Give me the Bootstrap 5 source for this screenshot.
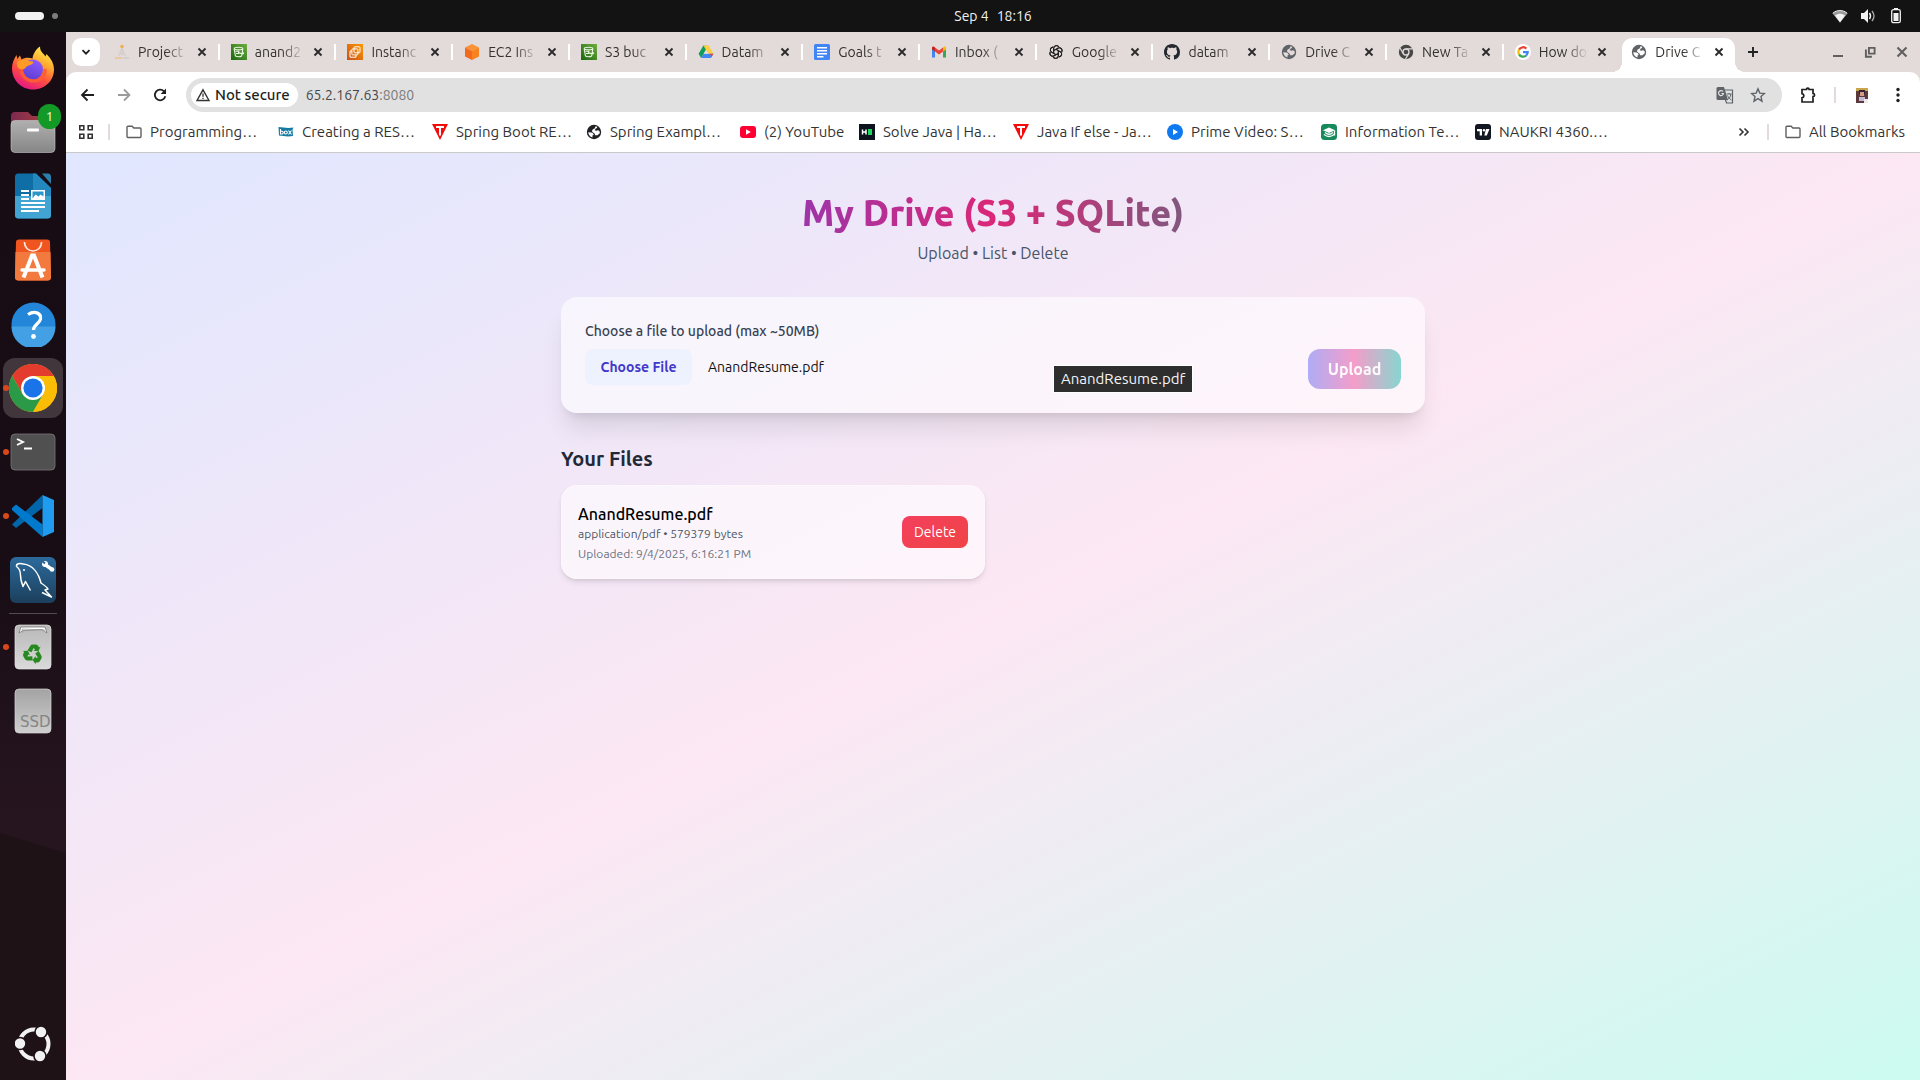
<!DOCTYPE html>
<html lang="en">
<head>
<meta charset="utf-8">
<meta name="viewport" content="width=device-width, initial-scale=1">
<title>Drive</title>
<link rel="stylesheet" href="https://cdn.jsdelivr.net/npm/bootstrap@5.3.0/dist/css/bootstrap.min.css">
<style>
  :root { --ui: Ubuntu, "Open Sans", "Noto Sans", sans-serif; }
  body { font-family: var(--ui); font-size: 15px; line-height: 20px; color: #1f1f1f; background: #180e14; }
  button { font-family: inherit; }
  svg { display: block; flex: none; }
  .plain { border: 0; background: none; padding: 0; color: inherit; display: flex; align-items: center; justify-content: center; flex: none; }

  /* system bar */
  .sysbar { height: 32px; background: #131313; color: #f2f2f2; font-size: 14px; padding: 0 16px 0 15px; }
  .sys-left { width: 147px; }
  .sys-right { width: 80px; gap: 12px; }
  .workspace-pill { width: 29px; height: 8px; border-radius: 4px; background: #f2f2f2; }
  .workspace-dot { width: 6px; height: 6px; border-radius: 3px; background: #7d7d7d; }

  /* dock */
  .dock { width: 66px; background: linear-gradient(197deg, transparent 0 calc(100% - 237px), #1e1217 calc(100% - 236px)), linear-gradient(#170c13, #180d14 50%, #26151f 76%); padding: 4px 0; }
  .dock-item { width: 66px; height: 64px; position: relative; }
  .dock-item.running::before { content: ""; position: absolute; left: 3px; top: 29px; width: 6px; height: 6px; border-radius: 3px; background: #d9481c; z-index: 1; }
  .dock-item.current::after { content: ""; position: absolute; inset: 2px 3px; border-radius: 12px; background: #42363d; }
  .dock-item svg { position: relative; z-index: 1; }
  .dock-count { position: absolute; z-index: 2; right: 5px; top: 4px; width: 23px; height: 25px; border-radius: 12px; background: #139a26; color: #fff; font-size: 13px; line-height: 25px; text-align: center; }
  .dock-rule { width: 48px; height: 1px; background: #534a50; margin: 1px 0; flex: none; }

  /* browser */
  .window { min-width: 0; }
  .tabstrip { height: 40px; background: #e3dbd9; padding: 0 10px 0 6px; }
  .tab-search { width: 28px; height: 28px; border-radius: 9px; background: #fff; }
  .tabs { flex: 0 1 1637px; min-width: 0; margin-left: 3px; height: 100%; font-size: 14px; }
  .tab { flex: 1 1 0; min-width: 0; padding: 0 10px 0 11px; height: 40px; position: relative; }
  .tab:not(.open):not(.last)::after { content: ""; position: absolute; right: 0; top: 12px; width: 2px; height: 16px; background: #fff; }
  .tab-text { flex: 1 1 0; min-width: 0; margin: 0 6px 0 8px; overflow: hidden; white-space: nowrap; color: #33302f; -webkit-mask-image: linear-gradient(90deg, #000 55%, transparent); mask-image: linear-gradient(90deg, #000 55%, transparent); }
  .tab.open::before { content: ""; position: absolute; left: 2px; right: 5px; top: 6px; bottom: 0; border-radius: 10px 10px 0 0; background: #fff; }
  .tab.open { padding-right: 13px; }
  .tab.open > * { position: relative; }
  .tab-foot { position: absolute !important; bottom: 0; width: 10px; height: 10px; }
  .tab-foot.start { left: -8px; background: radial-gradient(circle at 0 0, #e3dbd9 10px, #fff 10px); }
  .tab-foot.end { right: -5px; background: radial-gradient(circle at 100% 0, #e3dbd9 10px, #fff 10px); }
  .under-tabs { background: #e3dbd9; }
  .toolbar { height: 46px; background: #fff; border-radius: 10px 10px 0 0; padding: 0 8px 0 12px; }
  .omnibox { height: 34px; border-radius: 17px; background: #e1e1e1; padding: 0 16px 0 5px; margin-left: 16px; min-width: 0; }
  .site-chip { height: 24px; border-radius: 12px; background: #fff; padding: 0 8px 0 4px; font-weight: 500; }
  .url { font-size: 14px; flex: 1 1 0; min-width: 0; color: #474747; }
  .url-port { color: #7a7a7a; }
  .on-strip { --cut: #e3dbd9; color: #5f6368; }
  .on-white { --cut: #fff; color: #5f6368; }
  .on-white.dark { color: #202124; }
  .vrule { width: 2px; height: 16px; background: #e3dbd9; flex: none; }
  .bookmarks { height: 35px; background: #fff; border-bottom: 1px solid #c9c9c9; padding: 0 15px 6px 12px; color: #333; }
  .bookmarks a { color: inherit; text-decoration: none; white-space: nowrap; display: flex; align-items: center; gap: 8px; }
  .apps-rule { margin: 0 16px 0 14px; }
  .bookmark { flex: 0 0 154px; }
  .bookmark.first { flex-basis: 152px; }
  .bookmark.slim { flex-basis: 119px; }

  /* drive page */
  .drive { background: linear-gradient(to bottom right, #e0e7ff, #fce7f3, #ccfbf1); padding: 40px 16px; }
  .drive-body { max-width: 864px; }
  .drive-title { font-size: 36px; line-height: 40px; font-weight: 800; margin: 0 0 8px; background: linear-gradient(90deg, #4f46e5, #db2777, #0d9488); -webkit-background-clip: text; background-clip: text; color: transparent; }
  .drive-sub { font-size: 16px; line-height: 24px; color: #475569; margin: 0; }
  .upload-card { background: rgba(255,255,255,.6); border-radius: 16px; padding: 24px; margin: 32px 0; box-shadow: 0 20px 25px -5px rgba(0,0,0,.1), 0 8px 10px -6px rgba(0,0,0,.1); position: relative; }
  .upload-label { color: #374151; margin-bottom: 8px; font-size: 14px; line-height: 20px; font-weight: 500; }
  .file-pick { font-size: 14px; line-height: 20px; height: 36px; color: #111; }
  .file-pick::file-selector-button { width: 107px; height: 36px; border: 0; border-radius: 8px; background: #eef2ff; color: #4338ca; font-weight: 600; padding: 0; margin: 0 16px 0 0; font-family: inherit; }
  .upload-btn { width: 93px; height: 40px; border: 0; border-radius: 12px; padding: 0; font-size: 16px; font-weight: 600; color: #fff; background: linear-gradient(90deg, #6366f1, #ec4899, #14b8a6); opacity: .5; }
  .file-tip { position: absolute; left: 493px; top: 69px; background: #2e2e2e; color: #f5f5f5; padding: 3px 7px; outline: 1px solid #fff; }
  .files-title { font-size: 20px; line-height: 28px; font-weight: 600; color: #1f2937; margin: 0 0 12px; }
  .file-card { background: rgba(255,255,255,.6); border: 1px solid rgba(255,255,255,.3); border-radius: 16px; padding: 16px; box-shadow: 0 4px 6px -1px rgba(0,0,0,.1), 0 2px 4px -2px rgba(0,0,0,.1); }
  .file-name { font-size: 16px; line-height: 24px; font-weight: 500; color: #000; }
  .file-meta { font-size: 12px; line-height: 16px; color: #4b5563; }
  .file-date { font-size: 12px; line-height: 16px; color: #6b7280; margin-top: 4px; }
  .delete-btn { width: 66px; height: 32px; border: 0; border-radius: 8px; padding: 0; font-size: 14px; color: #fff; background: linear-gradient(to bottom right, #f43f5e, #ef4444); }
</style>
<script src="https://cdn.jsdelivr.net/npm/bootstrap@5.3.0/dist/js/bootstrap.bundle.min.js"></script>
</head>
<body class="d-flex flex-column min-vh-100">

<svg width="0" height="0" class="position-absolute" aria-hidden="true">
  <defs>
    <linearGradient id="gGreen" x1="0" y1="1" x2="1" y2="0"><stop offset="0" stop-color="#1b660f"/><stop offset="1" stop-color="#6cae3e"/></linearGradient>
    <linearGradient id="gOrange" x1="0" y1="1" x2="1" y2="0"><stop offset="0" stop-color="#c8511b"/><stop offset="1" stop-color="#f90"/></linearGradient>
    <linearGradient id="gFox" x1=".8" y1="0" x2=".3" y2="1"><stop offset="0" stop-color="#fff44f"/><stop offset=".35" stop-color="#ffa930"/><stop offset=".65" stop-color="#ff4f3f"/><stop offset="1" stop-color="#e31587"/></linearGradient>
    <linearGradient id="gGlobe" x1=".7" y1="0" x2=".3" y2="1"><stop offset="0" stop-color="#9059ff"/><stop offset="1" stop-color="#5b3fd0"/></linearGradient>
    <linearGradient id="gGrey" x1="0" y1="0" x2="0" y2="1"><stop offset="0" stop-color="#b0b0b0"/><stop offset="1" stop-color="#868686"/></linearGradient>
    <linearGradient id="gFold" x1="0" y1="0" x2="1" y2="0"><stop offset="0" stop-color="#7c2a50"/><stop offset="1" stop-color="#b4433c"/></linearGradient>
    <linearGradient id="gSql" x1="0" y1="0" x2="0" y2="1"><stop offset="0" stop-color="#2c6a9c"/><stop offset="1" stop-color="#1c3f5c"/></linearGradient>
    <linearGradient id="gBin" x1="0" y1="0" x2="0" y2="1"><stop offset="0" stop-color="#b8b8b8"/><stop offset="1" stop-color="#dadada"/></linearGradient>
    <linearGradient id="gSsd" x1="0" y1="0" x2="0" y2="1"><stop offset="0" stop-color="#a3a3a3"/><stop offset="1" stop-color="#cfcfcf"/></linearGradient>
  </defs>
  <symbol id="x" viewBox="0 0 16 16"><path d="M4.500 4.500l7 7M11.500 4.500l-7 7" stroke="#2b2b2b" stroke-width="1.900" fill="none"/></symbol>
  <symbol id="s3" viewBox="0 0 16 16"><path fill="url(#gGreen)" d="M0 0h16v16H0z"/><g fill="none" stroke="#e9f5e2" stroke-width="1.100"><ellipse cx="7.500" cy="4.600" rx="4.300" ry="1.300"/><path d="M3.200 4.800l1.200 7c1.200 1.300 5.200 1.300 6.300 0l1.100-7M7 8.300c2 1.200 5.300 2 5.600 1.200.2-.7-1-1.300-1.600-1.600M4.500 7.200h3.300v2.300H5"/></g></symbol>
  <symbol id="ec2" viewBox="0 0 16 16"><path fill="url(#gOrange)" d="M0 0h16v16H0z"/><g fill="none" stroke="#fff" stroke-width="1"><rect x="7" y="2.800" width="6" height="6" rx=".8"/><rect x="4.900" y="4.900" width="6" height="6" rx=".8"/><path d="M4.900 7H3v6.200h6V11"/></g></symbol>
  <symbol id="cube" viewBox="0 0 16 16"><path fill="#fb9234" d="M8 0l7 3.500L8 7 1 3.500z"/><path fill="#f26a1b" d="M1 3.500L8 7v9l-7-3.500z"/><path fill="#f98220" d="M15 3.500L8 7v9l7-3.500z"/></symbol>
  <symbol id="gdrive" viewBox="0 0 16 16"><path fill="#0f9d58" d="M5.400 1.500L.6 9.800l2.500 4.300L10 2z"/><path fill="#ffcd40" d="M5.400 1.500h5.200l4.800 8.300h-5L8 5.700z"/><path fill="#4285f4" d="M15.400 9.800L13 14.100H3.100l2.400-4.300z"/><path fill="#ea4335" d="M12 9.800h3.400L13.500 13z"/><path fill="#e3dbd9" d="M8 5.900l2.200 3.900H5.800z"/></symbol>
  <symbol id="gdoc" viewBox="0 0 16 16"><rect width="16" height="16" rx="1.500" fill="#4285f4"/><path fill="#fff" d="M3 3h10v1.600H3zM3 6h10v1.600H3zM3 9h10v1.600H3zM3 12h6.500v1.500H3z"/></symbol>
  <symbol id="gmail" viewBox="0 0 16 16"><path fill="#4285f4" d="M1 4v9.500h3V7z"/><path fill="#34a853" d="M15 4v9.500h-3V7z"/><path fill="#ea4335" d="M4 3.500l4 3 4-3v4L8 10.500l-4-3z"/><path fill="#c5221f" d="M1 4c0-1.500 1.700-2 3-.5v4L1 5.500z"/><path fill="#fbbc04" d="M15 4c0-1.500-1.700-2-3-.5v4l3-2z"/></symbol>
  <symbol id="gpt" viewBox="0 0 16 16"><g fill="none" stroke="#222" stroke-width="1.050"><path id="knot" d="M5.700 9.300V4.300a2.800 2.800 0 0 1 5.200-1.400M5.700 6.600L9.800 4.200a2.800 2.800 0 0 1 3.900 3.700"/><use href="#knot" transform="rotate(60 8 8)"/><use href="#knot" transform="rotate(120 8 8)"/><use href="#knot" transform="rotate(180 8 8)"/><use href="#knot" transform="rotate(240 8 8)"/><use href="#knot" transform="rotate(300 8 8)"/></g></symbol>
  <symbol id="github" viewBox="0 0 16 16"><path fill="#24292f" d="M8 0C3.580 0 0 3.580 0 8c0 3.540 2.290 6.530 5.470 7.590.4.070.55-.17.55-.38 0-.19-.01-.82-.01-1.490-2.010.37-2.530-.49-2.690-.94-.09-.23-.48-.94-.82-1.130-.28-.15-.68-.52-.01-.53.63-.01 1.080.58 1.230.82.72 1.210 1.870.87 2.330.66.070-.52.28-.87.51-1.070-1.780-.2-3.640-.89-3.640-3.950 0-.87.31-1.590.82-2.150-.08-.2-.36-1.020.08-2.120 0 0 .67-.21 2.200.82.64-.18 1.320-.27 2-.27s1.360.09 2 .27c1.530-1.040 2.200-.82 2.200-.82.44 1.100.16 1.920.08 2.120.51.56.82 1.270.82 2.150 0 3.070-1.870 3.750-3.650 3.950.29.25.54.73.54 1.480 0 1.070-.01 1.930-.01 2.200 0 .21.15.46.55.38A8.010 8.010 0 0 0 16 8c0-4.420-3.580-8-8-8"/></symbol>
  <symbol id="globe" viewBox="0 0 16 16"><circle cx="8" cy="8" r="7.200" fill="currentColor"/><path fill="var(--cut)" d="M9.600 2.200l1.600.6c.2 1.300-.9 1.600-1.700 2L8.700 6.300l1.700.4 1.700-.5 1.500 1.100.2 1.900-2.300 2.100H9.200L8.500 9.400 6.400 8.100c-.7-1-.2-2.200.7-2.900l1.500-.6z"/><path fill="var(--cut)" d="M2.200 8.300l3 .1c1.600.2 2.600 1.300 2.400 2.600l-1.200.6.1 1.900c-2.500-.6-4.100-2.600-4.300-5.200z"/></symbol>
  <symbol id="chromegrey" viewBox="0 0 16 16"><circle cx="8" cy="8" r="7.200" fill="#474747"/><circle cx="8" cy="8" r="3" fill="#474747" stroke="#e3dbd9" stroke-width="1.300"/><path stroke="#e3dbd9" stroke-width="1.200" d="M8 4.900h6.600M5.300 9.600L2 4M10.700 9.600L7.400 15.200"/></symbol>
  <symbol id="google" viewBox="0 0 16 16"><circle cx="8" cy="8" r="8" fill="#fff"/><g fill="none" stroke-width="2.300"><path stroke="#ea4335" d="M4 5.600A4.700 4.700 0 0 1 11.400 4.600"/><path stroke="#fbbc04" d="M4 10.400A4.700 4.700 0 0 1 4 5.600"/><path stroke="#34a853" d="M11.200 11.500A4.700 4.700 0 0 1 4 10.400"/><path stroke="#4285f4" d="M8 8.100h4.700a4.700 4.700 0 0 1-1.500 3.400"/></g></symbol>
  <symbol id="folder" viewBox="0 0 16 16"><path d="M1 3.200c0-.6.4-.9.900-.9h4.300l1.600 1.700h6.300c.5 0 .9.400.9.900v7.700c0 .5-.4.900-.9.900H1.900c-.5 0-.9-.4-.9-.9z" fill="none" stroke="#5f5f5f" stroke-width="1.400"/></symbol>
  <symbol id="redT" viewBox="0 0 16 16"><path fill="#f40b0b" d="M0 0h16L8 16z"/><path fill="#fff" d="M4 2h8v2H9v7.500H7V4H4z"/></symbol>
</svg>

<!-- system bar -->
<header class="sysbar d-flex align-items-center">
  <div class="sys-left d-flex align-items-center gap-2"><span class="workspace-pill"></span><span class="workspace-dot"></span></div>
  <div class="d-flex justify-content-center gap-2 flex-grow-1"><span>Sep 4</span><span>18:16</span></div>
  <div class="sys-right d-flex justify-content-end align-items-center">
    <svg width="16" height="16" viewBox="0 0 16 16"><path d="M.5 5.500C4.500 1.600 11.500 1.600 15.500 5.500L8 14.500z" fill="#999"/><path d="M.8 5.200C4.700 1.700 11.300 1.700 15.200 5.200" stroke="#eee" fill="none"/><path d="M3 7.500c3-2.200 7-2.200 10 0l-5 7z" fill="#f2f2f2"/></svg>
    <svg width="16" height="16" viewBox="0 0 16 16"><path d="M1 5h3l4-4v14l-4-4H1z" fill="#f2f2f2"/><path d="M9.500 5q2 3 0 6" stroke="#f2f2f2" stroke-width="1.500" fill="none"/><path d="M12 3q4 5 0 10" stroke="#aaa" stroke-width="1.300" fill="none"/></svg>
    <svg width="16" height="16" viewBox="-2 0 16 16"><path d="M4 0h4v1.500H4z" fill="#f2f2f2"/><rect x="1.700" y="1.700" width="8.600" height="13" rx="1.800" fill="none" stroke="#f2f2f2" stroke-width="1.300"/><path d="M3.500 5h5v8h-5z" fill="#f2f2f2"/></svg>
  </div>
</header>

<div class="d-flex flex-grow-1">

  <!-- dock -->
  <nav class="dock d-flex flex-column align-items-center flex-shrink-0" aria-label="Dock">
    <button class="plain dock-item" aria-label="Firefox"><svg width="44" height="44" viewBox="0 0 44 44"><path fill="url(#gFox)" d="M1 22c0-5 2-9 4.500-13l.8 4L9 9.500l1.500 4c3-2 7-2 11-1C22 8 25 3 29 .5c0 3 1 5.500 4 8l1.500 2 1-2.500c5 5 7.500 10 7.500 15.500C43 35 33.500 43.500 22 43.500S1 34.500 1 22z"/><circle cx="22" cy="23.500" r="10" fill="url(#gGlobe)"/><path fill="#ff9a26" d="M6 16c3-2.500 8-3 12-1 2 .2 4 .3 4.500 1.500-1 2-4 2.500-6 3.500-2 1.500-2.500 3-5 3.500C7 23.500 5.500 20 6 16z"/><path fill="none" stroke="#ff5b35" stroke-width="3" d="M10.500 25c1 6 6 10 12 10 7 0 12-5 11.500-12"/></svg></button>
    <button class="plain dock-item" aria-label="Files"><svg width="46" height="42" viewBox="0 0 46 42"><path fill="url(#gFold)" d="M1 5q0-4 4-4h13l4 4h19q4 0 4 4v12H1z"/><rect x="1" y="9.500" width="44" height="32" rx="4" fill="url(#gGrey)" stroke="#c7c7c7" stroke-width=".6"/><rect x="17" y="17.500" width="12" height="3" rx="1" fill="#fff"/></svg><span class="dock-count">1</span></button>
    <button class="plain dock-item" aria-label="Writer"><svg width="38" height="46" viewBox="0 0 38 46"><path fill="#0e6ea5" d="M4 .5h18L37 15v27q0 3.500-3.500 3.500h-29Q1 45.500 1 42V4Q1 .5 4 .5z"/><path fill="#41a4d2" d="M1 23h36v19q0 3.500-3.500 3.500h-29Q1 45.500 1 42z"/><path fill="#2388bd" d="M19 .5h3L37 15v8H19z"/><path fill="#2b7fab" d="M28 .5h6Q37 .5 37 4v7z"/><g fill="#fff"><path d="M7 17h8v2H7zM7 21h8v2H7zM7 25h8v2H7zM7 29h24v2H7zM7 33h24v2H7zM7 37h18v2H7z"/><path d="M17 17h14v10H17z"/></g><path fill="#2b95c9" d="M18.500 18.500h11v5l-3-2-2 2-3-2-3 4z"/></svg></button>
    <button class="plain dock-item" aria-label="App Center"><svg width="36" height="42" viewBox="0 0 36 42"><path fill="#f1551f" d="M1 3Q1 .5 4 .5h28q3 0 3 2.500l1 35q0 3.500-3.500 3.500h-29Q0 41.500 0 38z"/><path fill="#f37a3e" d="M.5 13h35L36 38q0 3.500-3.500 3.500h-29Q0 41.500 0 38z"/><path fill="none" stroke="#ffe9dd" stroke-width="1.600" d="M9.500 3c0 12 17 12 17 0"/><path fill="none" stroke="#fff" stroke-width="4" d="M8.500 38.500L17 16.500h2l8.500 22"/><path stroke="#fff" stroke-width="3.500" stroke-linecap="round" d="M7 31h22"/></svg></button>
    <button class="plain dock-item" aria-label="Help"><svg width="45" height="45" viewBox="0 0 45 45"><circle cx="22.500" cy="22.500" r="22" fill="#2386d8"/><path fill="#43a0e4" d="M.5 24.500h44a22 22 0 0 1-44 0z"/><path fill="none" stroke="#fff" stroke-width="3.300" d="M17 12.500c6-4 13.500-2 12.500 4.500-.8 4.500-7 5.500-7 11"/><circle cx="22.500" cy="34.500" r="2.400" fill="#fff"/></svg></button>
    <button class="plain dock-item running current" aria-label="Chrome"><svg width="48" height="48" viewBox="0 0 48 48"><circle cx="24" cy="24" r="24" fill="#fbbc05"/><path fill="#e33b2e" d="M3.200 12A24 24 0 0 1 44.800 12H24L13.600 30z"/><path fill="#2a9a48" d="M3.200 12A24 24 0 0 0 24 48l10.400-18H13.600z"/><path fill="#fbbc05" d="M24 48l10.400-18L24 12h20.800A24 24 0 0 1 24 48z"/><circle cx="24" cy="24" r="12" fill="#fff"/><circle cx="24" cy="24" r="9.600" fill="#1a73e8"/></svg></button>
    <button class="plain dock-item running" aria-label="Terminal"><svg width="46" height="38" viewBox="0 0 46 38"><rect x="1" y="1" width="44" height="36" rx="4" fill="#505050" stroke="#777" stroke-width=".8"/><path fill="none" stroke="#fff" stroke-width="1.900" d="M7 6l6 3-6 3M14 15.500h8"/></svg></button>
    <button class="plain dock-item running" aria-label="Code"><svg width="44" height="44" viewBox="0 0 44 44"><path fill="#0065a9" d="M1 30.500L31.500 1v13L5 34z"/><path fill="#007acc" d="M1 14l4-3.500 26.500 20V43L1 16z"/><path fill="#1f9cf0" d="M31.500 1L43 6v32l-11.500 5z"/></svg></button>
    <button class="plain dock-item" aria-label="Workbench"><svg width="48" height="48" viewBox="0 0 48 48"><rect x="1" y="1" width="46" height="46" rx="6" fill="url(#gSql)"/><path fill="none" stroke="#fff" stroke-width="1.500" stroke-linejoin="round" d="M7.500 10.500c-.5-3 3-3.700 7-2.500 9 1 15 9 17.500 19 3 2 6 4 7 6l-3 1 6.500 7-9.500-4.500M7.500 10.500c3 2 4 5 4 9 0 4 1 7 2.500 11l2.500-5 5 9"/><circle cx="15" cy="14" r="1" fill="#fff"/><path stroke="#fff" stroke-width="3.500" d="M36 8.500l7 5"/><circle cx="36" cy="8" r="3" fill="#fff"/><circle cx="43" cy="13.500" r="2.300" fill="#fff"/><path stroke="#2b6494" stroke-width="2" d="M33 5l3 2.500"/></svg></button>
    <div class="dock-rule"></div>
    <button class="plain dock-item running" aria-label="Trash"><svg width="38" height="46" viewBox="0 0 38 46"><rect x="1" y="1" width="36" height="44" rx="4" fill="url(#gBin)" stroke="#e4e4e4" stroke-width=".7"/><path fill="#fff" stroke="#777" stroke-width=".8" d="M5 9l2-6h24l2 6-5-3.500-19 1z"/><path d="M9 9l-1-4 23 1" fill="none" stroke="#999" stroke-width=".7"/><g transform="translate(19 30)" fill="#27891f"><g id="arr"><path d="M-5.500-3.500L-2.600-8.300Q-1.800-9.500-.5-9.500h2.800L-1.500-1.700zM2-9.500h1.200q1.200.2 1.900 1.300l1 1.600 1.500-.8-2.200 4.700-5-.6 1.500-.9-1.800-3z"/></g><use href="#arr" transform="rotate(120)"/><use href="#arr" transform="rotate(240)"/></g></svg></button>
    <button class="plain dock-item" aria-label="SSD"><svg width="38" height="46" viewBox="0 0 38 46"><rect x="1" y="1" width="36" height="44" rx="4" fill="url(#gSsd)" stroke="#d6d6d6" stroke-width=".7"/><text x="6" y="39" font-size="15" fill="#858585" font-family="DejaVu Sans, sans-serif">SSD</text></svg></button>
    <button class="plain dock-item mt-auto" aria-label="Show apps"><svg width="36" height="36" viewBox="0 0 36 36"><circle cx="19" cy="18" r="14.500" fill="none" stroke="#f2f2f2" stroke-width="4"/><g fill="#f2f2f2" stroke="#1e1217" stroke-width="1.600"><circle cx="5" cy="17.500" r="6"/><circle cx="26" cy="6" r="6"/><circle cx="25" cy="30" r="6"/></g></svg></button>
  </nav>

  <!-- browser window -->
  <div class="window d-flex flex-column flex-grow-1">
    <div class="tabstrip d-flex align-items-center">
      <button class="plain tab-search" aria-label="Search tabs"><svg width="12" height="12" viewBox="0 0 12 12"><path d="M2.500 4.200L6 7.700l3.500-3.500" fill="none" stroke="#222" stroke-width="1.900"/></svg></button>
      <div class="tabs d-flex">
        <div class="tab d-flex align-items-center"><svg width="16" height="16" viewBox="0 0 16 16"><circle cx="8" cy="2.500" r="1.800" fill="#f0b050"/><path d="M8 4L4.500 12M8 4l3.500 8M5.500 9.500h5M8 5v7" stroke="#d3cac5" fill="none"/><path d="M1 14h7" stroke="#edc08a" stroke-width="1.500"/><path d="M9 14h6" stroke="#ccc" stroke-width="1.500"/></svg><span class="tab-text">Project</span><button class="plain" aria-label="Close"><svg width="16" height="16"><use href="#x"/></svg></button></div>
        <div class="tab d-flex align-items-center"><svg width="16" height="16"><use href="#s3"/></svg><span class="tab-text">anand2</span><button class="plain" aria-label="Close"><svg width="16" height="16"><use href="#x"/></svg></button></div>
        <div class="tab d-flex align-items-center"><svg width="16" height="16"><use href="#ec2"/></svg><span class="tab-text">Instanc</span><button class="plain" aria-label="Close"><svg width="16" height="16"><use href="#x"/></svg></button></div>
        <div class="tab d-flex align-items-center"><svg width="16" height="16"><use href="#cube"/></svg><span class="tab-text">EC2 Ins</span><button class="plain" aria-label="Close"><svg width="16" height="16"><use href="#x"/></svg></button></div>
        <div class="tab d-flex align-items-center"><svg width="16" height="16"><use href="#s3"/></svg><span class="tab-text">S3 buc</span><button class="plain" aria-label="Close"><svg width="16" height="16"><use href="#x"/></svg></button></div>
        <div class="tab d-flex align-items-center"><svg width="16" height="16"><use href="#gdrive"/></svg><span class="tab-text">Datam</span><button class="plain" aria-label="Close"><svg width="16" height="16"><use href="#x"/></svg></button></div>
        <div class="tab d-flex align-items-center"><svg width="16" height="16"><use href="#gdoc"/></svg><span class="tab-text">Goals t</span><button class="plain" aria-label="Close"><svg width="16" height="16"><use href="#x"/></svg></button></div>
        <div class="tab d-flex align-items-center"><svg width="16" height="16"><use href="#gmail"/></svg><span class="tab-text">Inbox (</span><button class="plain" aria-label="Close"><svg width="16" height="16"><use href="#x"/></svg></button></div>
        <div class="tab d-flex align-items-center"><svg width="16" height="16"><use href="#gpt"/></svg><span class="tab-text">Google</span><button class="plain" aria-label="Close"><svg width="16" height="16"><use href="#x"/></svg></button></div>
        <div class="tab d-flex align-items-center"><svg width="16" height="16"><use href="#github"/></svg><span class="tab-text">datam</span><button class="plain" aria-label="Close"><svg width="16" height="16"><use href="#x"/></svg></button></div>
        <div class="tab d-flex align-items-center"><svg width="16" height="16" class="on-strip"><use href="#globe"/></svg><span class="tab-text">Drive C</span><button class="plain" aria-label="Close"><svg width="16" height="16"><use href="#x"/></svg></button></div>
        <div class="tab d-flex align-items-center"><svg width="16" height="16"><use href="#chromegrey"/></svg><span class="tab-text">New Ta</span><button class="plain" aria-label="Close"><svg width="16" height="16"><use href="#x"/></svg></button></div>
        <div class="tab last d-flex align-items-center"><svg width="16" height="16"><use href="#google"/></svg><span class="tab-text">How do</span><button class="plain" aria-label="Close"><svg width="16" height="16"><use href="#x"/></svg></button></div>
        <div class="tab open d-flex align-items-center"><span class="tab-foot start"></span><span class="tab-foot end"></span><svg width="16" height="16" class="on-white"><use href="#globe"/></svg><span class="tab-text">Drive C</span><button class="plain" aria-label="Close"><svg width="16" height="16"><use href="#x"/></svg></button></div>
      </div>
      <button class="plain ms-1" aria-label="New tab"><svg width="16" height="14" viewBox="0 0 16 14"><path d="M9 2v10M4 7h10" stroke="#222" stroke-width="1.900"/></svg></button>
      <div class="d-flex align-items-center ms-auto gap-3">
        <button class="plain" aria-label="Minimize"><svg width="16" height="16" viewBox="0 0 16 16"><path d="M3 12h10" stroke="#5f5f5f" stroke-width="2"/></svg></button>
        <button class="plain" aria-label="Restore"><svg width="16" height="16" viewBox="0 0 16 16"><path d="M6.900 3.900h5.700v5.700H6.900zM3.900 5.500v7.300h6" fill="none" stroke="#5f5f5f" stroke-width="1.900"/></svg></button>
        <button class="plain" aria-label="Close window"><svg width="16" height="16" viewBox="0 0 16 16"><path d="M3.500 3.500l9 9M12.500 3.500l-9 9" stroke="#5f5f5f" stroke-width="2.100"/></svg></button>
      </div>
    </div>

    <div class="under-tabs">
    <div class="toolbar d-flex align-items-center">
      <button class="plain" aria-label="Back"><svg width="20" height="16" viewBox="0 0 20 16"><path d="M16 8H5M9.500 2.500L4 8l5.500 5.500" fill="none" stroke="#1f1f1f" stroke-width="1.800"/></svg></button>
      <button class="plain ms-3" aria-label="Forward"><svg width="20" height="16" viewBox="0 0 20 16"><path d="M4 8h11M10 2.500L15.500 8 10 13.500" fill="none" stroke="#9b9b9b" stroke-width="1.800"/></svg></button>
      <button class="plain ms-3" aria-label="Reload"><svg width="20" height="16" viewBox="0 0 20 16"><path d="M15.300 9.300A5.300 5.300 0 1 1 14 4.300L15.500 6" fill="none" stroke="#1f1f1f" stroke-width="1.800"/><path d="M16 1.500V7h-5.300z" fill="#1f1f1f"/></svg></button>
      <div class="omnibox d-flex align-items-center flex-grow-1">
        <button class="plain site-chip"><svg width="16" height="14" viewBox="0 0 14 14" class="me-1"><path d="M7 1.800L13 12.500H1z" fill="none" stroke="#333" stroke-width="1.400"/><path d="M7 5.500v3.300M7 9.700v1.300" stroke="#333" stroke-width="1.300"/></svg>Not secure</button>
        <div class="url ms-2" role="textbox" aria-label="Address">65.2.167.63<span class="url-port">:8080</span></div>
        <button class="plain" aria-label="Translate"><svg width="18" height="18" viewBox="0 0 18 18"><path d="M2 1h6l4 13H2q-1.500 0-1.500-1.500v-10Q.5 1 2 1z" fill="#5f6368"/><path d="M8.500 4h8v13h-6l-1-3" fill="none" stroke="#5f6368" stroke-width="1.200"/><path d="M7 5.500a2.500 2.500 0 1 0 .5 2H5.500" stroke="#e1e1e1" fill="none" stroke-width="1.200"/><path d="M10.500 8h5M13 7v1M15 8c-.5 3-2 5-4 6M11.500 9.500c1 2 2 3.500 4 4.500" stroke="#5f6368" fill="none"/></svg></button>
        <button class="plain ms-3" aria-label="Bookmark"><svg width="16" height="16" viewBox="0 0 16 16"><path d="M8 1.800l1.800 4.300 4.700.4-3.500 3.100 1 4.600-4-2.500-4 2.500 1-4.600L1.500 6.500l4.700-.4z" fill="none" stroke="#5f6368" stroke-width="1.400"/></svg></button>
      </div>
      <button class="plain ms-3" aria-label="Extensions"><svg width="20" height="18" viewBox="0 0 20 18"><path d="M4 3.500h4.500a1.300 1.300 0 0 1 2.600 0H15v4a1.600 1.600 0 0 1 0 3.200V16H4v-4.200c2.500-.5 2.500-3.700 0-4.200z" fill="none" stroke="#1f1f1f" stroke-width="1.700"/></svg></button>
      <span class="vrule mx-3"></span>
      <button class="plain ms-1" aria-label="Profile"><svg width="12" height="15" viewBox="0 0 12 15"><path fill="#5a3a3d" d="M0 0h12v15H0z"/><path fill="#c9a54d" d="M0 0h12v3H0z"/><path fill="#33212f" d="M3 2h6v4H3z"/><path fill="#d79b86" d="M4 4h4v4H4z"/><path fill="#c5b8d6" d="M3 9h6v4H3z"/><path fill="#efe9ea" d="M8 11h4v4H8z"/></svg></button>
      <button class="plain ms-3" aria-label="Menu"><svg width="28" height="16" viewBox="0 0 28 16"><g fill="#1f1f1f"><circle cx="14" cy="2.500" r="1.700"/><circle cx="14" cy="8" r="1.700"/><circle cx="14" cy="13.500" r="1.700"/></g></svg></button>
    </div>
    </div>

    <nav class="bookmarks d-flex align-items-center" aria-label="Bookmarks">
      <button class="plain" aria-label="Apps"><svg width="16" height="16" viewBox="0 0 16 16"><g fill="none" stroke="#333" stroke-width="1.600"><path d="M1.800 1.800h4v4h-4zM10.200 1.800h4v4h-4zM1.800 10.200h4v4h-4zM10.200 10.200h4v4h-4z"/></g></svg></button>
      <span class="vrule apps-rule"></span>
      <div class="d-flex flex-grow-1 overflow-hidden">
        <a class="bookmark first" href="#"><svg width="16" height="16"><use href="#folder"/></svg>Programming…</a>
        <a class="bookmark" href="#"><svg width="16" height="16" viewBox="0 0 16 16"><path fill="#147aa3" d="M.5 3l10 1 5-.5-1 2 .5 6.500-5 .5-9-1z"/><path fill="none" stroke="#fff" stroke-width="1.100" d="M2.500 5v5h1.400a1.200 1.200 0 0 0 0-2.700H2.500M10.500 6.500l3 4M13.500 6.500l-3 4"/><circle cx="7.800" cy="8.500" r="1.500" fill="none" stroke="#fff" stroke-width="1.100"/></svg>Creating a RES…</a>
        <a class="bookmark" href="#"><svg width="16" height="16"><use href="#redT"/></svg>Spring Boot RE…</a>
        <a class="bookmark" href="#"><svg width="16" height="16" class="on-white dark"><use href="#globe"/></svg>Spring Exampl…</a>
        <a class="bookmark slim" href="#"><svg width="16" height="16" viewBox="0 0 16 16"><rect y="2" width="16" height="12" rx="3" fill="#ff0033"/><path fill="#fff" d="M6 5.300L10.800 8 6 10.700z"/></svg>(2) YouTube</a>
        <a class="bookmark" href="#"><svg width="16" height="16" viewBox="0 0 16 16"><path fill="#0e141e" d="M0 0h16v16H0z"/><path fill="none" stroke="#fff" stroke-width="1.500" d="M3.500 5.500v5M7 5.500v5M3.500 8H7"/><path fill="#1ed760" d="M9 5h4v6H9z"/></svg>Solve Java | Ha…</a>
        <a class="bookmark" href="#"><svg width="16" height="16"><use href="#redT"/></svg>Java If else - Ja…</a>
        <a class="bookmark" href="#"><svg width="16" height="16" viewBox="0 0 16 16"><circle cx="8" cy="8" r="8" fill="#0f79f0"/><path fill="#fff" d="M6 5l5 3-5 3z"/></svg>Prime Video: S…</a>
        <a class="bookmark" href="#"><svg width="16" height="16" viewBox="0 0 16 16"><rect width="16" height="16" rx="3.500" fill="#178a5c"/><path fill="#fff" d="M8 3.500l6 2.700L8 9 2 6.200z"/><path fill="none" stroke="#fff" stroke-width="1.300" d="M4 8.500q4 3.500 8 0M3 10.500q5 4 10 0M13.500 6.500v5"/></svg>Information Te…</a>
        <a class="bookmark" href="#"><svg width="16" height="16" viewBox="0 0 16 16"><rect width="16" height="16" rx="3" fill="#131722"/><path fill="#fff" d="M2 5h5v6.500H4.700V7.200H2zM11 5h3.500l-2.700 6.500H9.300z"/><circle cx="9" cy="6.200" r="1.200" fill="#fff"/></svg>NAUKRI 4360.…</a>
      </div>
      <button class="plain mx-3" aria-label="More bookmarks"><svg width="14" height="12" viewBox="0 0 14 12"><path d="M2.500 2.500L6 6 2.500 9.500M7.500 2.500L11 6 7.500 9.500" fill="none" stroke="#333" stroke-width="1.600"/></svg></button>
      <span class="vrule me-3"></span>
      <a href="#"><svg width="16" height="16"><use href="#folder"/></svg>All Bookmarks</a>
    </nav>

    <!-- page -->
    <main class="drive flex-grow-1">
      <div class="drive-body mx-auto">
        <header class="text-center">
          <h1 class="drive-title">My Drive (S3 + SQLite)</h1>
          <p class="drive-sub">Upload • List • Delete</p>
        </header>

        <form class="upload-card d-flex align-items-end justify-content-between" onsubmit="return false">
          <div class="d-flex flex-column mb-1">
            <label class="upload-label" for="file">Choose a file to upload (max ~50MB)</label>
            <input class="file-pick" type="file" id="file">
          </div>
          <button class="upload-btn" type="submit">Upload</button>
          <div class="file-tip" role="tooltip">AnandResume.pdf</div>
        </form>

        <h2 class="files-title">Your Files</h2>
        <div class="row row-cols-1 row-cols-md-2 g-3">
          <div class="col">
            <article class="file-card d-flex align-items-center justify-content-between">
              <div>
                <div class="file-name">AnandResume.pdf</div>
                <div class="file-meta">application/pdf • 579379 bytes</div>
                <div class="file-date">Uploaded: 9/4/2025, 6:16:21 PM</div>
              </div>
              <button class="delete-btn" type="button">Delete</button>
            </article>
          </div>
        </div>
      </div>
    </main>
  </div>
</div>

<script>
  // Preselect the sample document in the file picker.
  const picked = new DataTransfer();
  picked.items.add(new File(['resume'], 'AnandResume.pdf', { type: 'application/pdf' }));
  document.getElementById('file').files = picked.files;
</script>
</body>
</html>
